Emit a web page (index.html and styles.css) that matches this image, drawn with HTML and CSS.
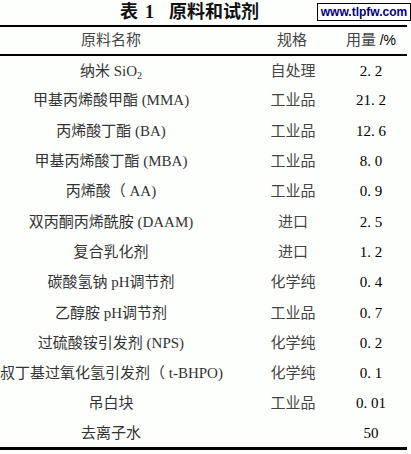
FILE: index.html
```html
<!DOCTYPE html>
<html lang="zh">
<head>
<meta charset="utf-8">
<title>表 1 原料和试剂</title>
<link rel="stylesheet" href="styles.css">
</head>
<body>
<div class="page">
  <div class="caption">
    <span class="title">表<span class="num">1</span>原料和试剂</span>
    <span class="logo">www.tlpfw.com</span>
  </div>
  <table class="data">
    <colgroup>
      <col class="c1"><col class="c2"><col class="c3">
    </colgroup>
    <thead>
      <tr><th>原料名称</th><th class="spec">规格</th><th class="amt">用量 <span class="unit">/%</span></th></tr>
    </thead>
    <tbody>
      <tr><td>纳米 SiO<sub>2</sub></td><td class="spec">自处理</td><td class="amt">2. 2</td></tr>
      <tr><td>甲基丙烯酸甲酯 (MMA)</td><td class="spec">工业品</td><td class="amt">21. 2</td></tr>
      <tr><td>丙烯酸丁酯 (BA)</td><td class="spec">工业品</td><td class="amt">12. 6</td></tr>
      <tr><td>甲基丙烯酸丁酯 (MBA)</td><td class="spec">工业品</td><td class="amt">8. 0</td></tr>
      <tr><td>丙烯酸（ AA)</td><td class="spec">工业品</td><td class="amt">0. 9</td></tr>
      <tr><td>双丙酮丙烯酰胺 (DAAM)</td><td class="spec">进口</td><td class="amt">2. 5</td></tr>
      <tr><td>复合乳化剂</td><td class="spec">进口</td><td class="amt">1. 2</td></tr>
      <tr><td>碳酸氢钠 pH调节剂</td><td class="spec">化学纯</td><td class="amt">0. 4</td></tr>
      <tr><td>乙醇胺 pH调节剂</td><td class="spec">工业品</td><td class="amt">0. 7</td></tr>
      <tr><td>过硫酸铵引发剂 (NPS)</td><td class="spec">化学纯</td><td class="amt">0. 2</td></tr>
      <tr><td>叔丁基过氧化氢引发剂（ t-BHPO)</td><td class="spec">化学纯</td><td class="amt">0. 1</td></tr>
      <tr><td>吊白块</td><td class="spec">工业品</td><td class="amt">0. 01</td></tr>
      <tr><td>去离子水</td><td class="spec"></td><td class="amt">50</td></tr>
    </tbody>
  </table>
</div>
</body>
</html>
```
FILE: styles.css
```css
html, body {
  margin: 0;
  padding: 0;
  background: #fdfffd;
}
.page {
  width: 411px;
  height: 454px;
  overflow: hidden;
  font-family: "Liberation Serif", "Noto Sans CJK SC", serif;
  color: #222;
}
.caption {
  display: flex;
  align-items: flex-start;
  height: 25px;
  padding-left: 120px;
  box-sizing: border-box;
}
.title {
  font-size: 18px;
  font-weight: bold;
  line-height: 25px;
  color: #111;
}
.title .num {
  margin: 0 15px 0 7px;
}
.logo {
  margin-left: auto;
  margin-top: 3px;
  width: 94px;
  height: 18px;
  box-sizing: border-box;
  border: 1px solid #000;
  font-family: "Liberation Sans", "DejaVu Sans", sans-serif;
  font-weight: bold;
  font-size: 12px;
  line-height: 16px;
  text-align: center;
  color: #000080;
  background: #fff;
}
.data {
  width: 407px;
  border-collapse: collapse;
  table-layout: fixed;
  font-size: 15px;
  line-height: 18px;
}
.c1 { width: 222px; }
.c2 { width: 113px; }
.c3 { width: 72px; }
.data thead tr {
  height: 29px;
  border-top: 2px solid #000;
  border-bottom: 2px solid #000;
}
.data th {
  font-weight: normal;
  padding: 0 0 2px 0;
  text-align: center;
  color: #444;
}
.data tbody tr {
  height: 30.3px;
}
.data tbody tr:last-child {
  border-bottom: 3px solid #000;
}
.data td {
  padding: 0;
  text-align: center;
  white-space: nowrap;
  vertical-align: middle;
  color: #333;
}
.data .spec {
  padding-left: 29px;
  color: #444;
}
.data th.spec { padding-left: 27px; }
.data td.amt {
  color: #000;
}
.unit {
  font-family: "Liberation Sans", sans-serif;
  font-size: 14px;
  color: #000;
}
sub {
  font-size: 10px;
  line-height: 0;
  vertical-align: -3px;
}
```
